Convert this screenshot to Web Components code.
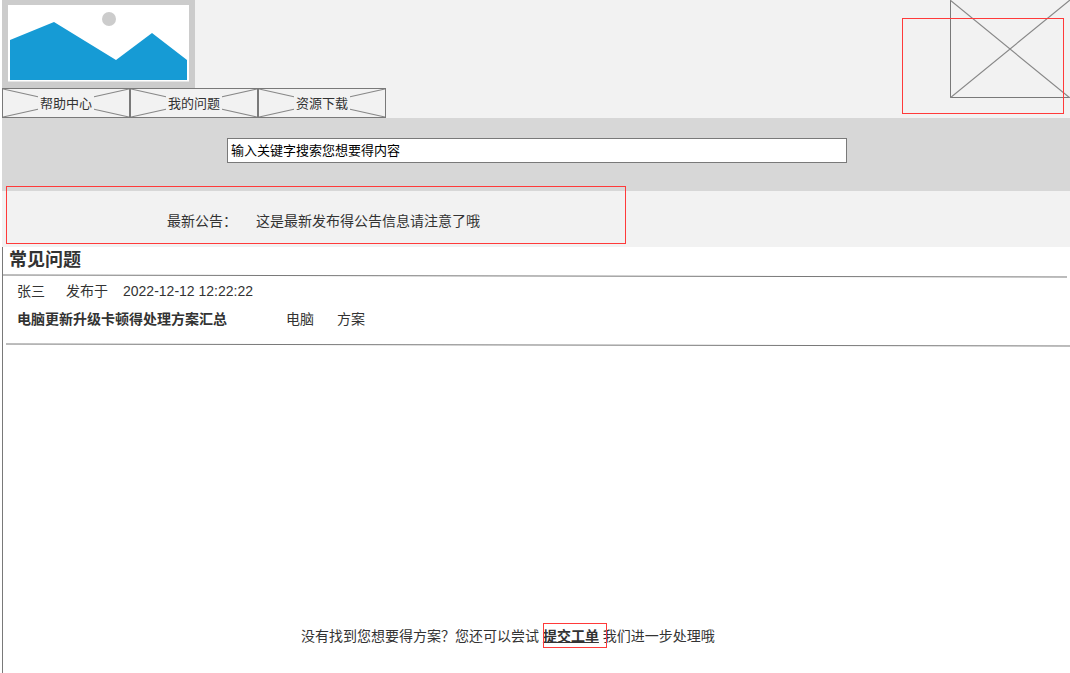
<!DOCTYPE html>
<html lang="zh">
<head>
<meta charset="utf-8">
<title>帮助中心</title>
<style>
  html, body { margin: 0; padding: 0; background: #fff; }
  body {
    font-family: "Liberation Sans", "Noto Sans CJK SC", sans-serif;
    font-size: 14px;
    color: #333;
  }
</style>
</head>
<body>
<help-page>
  <site-header>
    <nav-tab>帮助中心</nav-tab>
    <nav-tab>我的问题</nav-tab>
    <nav-tab>资源下载</nav-tab>
  </site-header>
  <search-band placeholder="输入关键字搜索您想要得内容"></search-band>
  <notice-band label="最新公告：" text="这是最新发布得公告信息请注意了哦"></notice-band>
  <faq-section heading="常见问题">
    <faq-item author="张三" time="2022-12-12 12:22:22" title="电脑更新升级卡顿得处理方案汇总" tags="电脑,方案"></faq-item>
  </faq-section>
</help-page>

<script>
// sloped rule used under the heading and under each item
const slopedRule = `<svg class="rule" width="1064" height="4" viewBox="0 0 1064 4"><line x1="0" y1="1" x2="1064" y2="3" stroke="#797979" stroke-width="1"/></svg>`;

class HelpPage extends HTMLElement {
  constructor() {
    super();
    this.attachShadow({ mode: 'open' });
    this.shadowRoot.innerHTML = `
      <style>
        :host { display: block; width: 1070px; height: 673px; overflow: hidden; }
        .wrap { display: flex; flex-direction: column; height: 100%; padding-left: 2px; box-sizing: border-box; }
      </style>
      <div class="wrap"><slot></slot></div>`;
  }
}
customElements.define('help-page', HelpPage);

class SiteHeader extends HTMLElement {
  constructor() {
    super();
    this.attachShadow({ mode: 'open' });
    this.shadowRoot.innerHTML = `
      <style>
        :host { display: block; position: relative; height: 118px; background: #f2f2f2; flex: none; }
        .logo { display: block; width: 193px; height: 88px; }
        nav { display: flex; }
        .x { position: absolute; left: 948px; top: 0; }
        .red { position: absolute; left: 900px; top: 18px; width: 160px; height: 94px; border: 1px solid #ff3a3a; }
      </style>
      <svg class="logo" viewBox="0 0 193 88">
        <rect width="193" height="88" fill="#ccc"/>
        <rect x="6" y="5" width="181" height="76.5" fill="#fff"/>
        <path d="M8 40 L52 22 L114 60 L150 33 L185 60 L185 80 L8 80 Z" fill="#169bd5"/>
        <circle cx="107" cy="19" r="7" fill="#ccc"/>
      </svg>
      <nav><slot></slot></nav>
      <svg class="x" width="120" height="98" viewBox="0 0 120 98">
        <path d="M.5 0V97.5H120" fill="none" stroke="#797979"/>
        <path d="M0 0L120 98M0 98L120 0" fill="none" stroke="#888" stroke-width="1.2"/>
      </svg>
      <div class="red"></div>`;
  }
}
customElements.define('site-header', SiteHeader);

class NavTab extends HTMLElement {
  constructor() {
    super();
    this.attachShadow({ mode: 'open' });
    this.shadowRoot.innerHTML = `
      <style>
        :host { display: flex; position: relative; align-items: center; justify-content: center; width: 128px; height: 30px; box-sizing: border-box; border: 1px solid #797979; padding-top: 2px; font-size: 13px; }
        svg { position: absolute; inset: 0; width: 100%; height: 100%; }
        span { position: relative; background: #f2f2f2; padding: 0 2px; line-height: 16px; }
      </style>
      <svg viewBox="0 0 126 28" preserveAspectRatio="none"><path d="M0 0L126 28M0 28L126 0" stroke="#888" stroke-width="1.1" fill="none"/></svg>
      <span><slot></slot></span>`;
  }
}
customElements.define('nav-tab', NavTab);

class SearchBand extends HTMLElement {
  constructor() {
    super();
    this.attachShadow({ mode: 'open' });
    const ph = this.getAttribute('placeholder');
    this.shadowRoot.innerHTML = `
      <style>
        :host { display: block; height: 73px; background: #d7d7d7; padding: 20px 0 0 225px; box-sizing: border-box; flex: none; }
        input { display: block; width: 620px; height: 25px; box-sizing: border-box; border: 1px solid #797979; background: #fff; padding: 0 3px; margin: 0; font: inherit; font-size: 13px; outline: none; }
        input::placeholder { color: #000; opacity: 1; }
      </style>
      <input placeholder="${ph}">`;
  }
}
customElements.define('search-band', SearchBand);

class NoticeBand extends HTMLElement {
  constructor() {
    super();
    this.attachShadow({ mode: 'open' });
    this.shadowRoot.innerHTML = `
      <style>
        :host { display: flex; position: relative; height: 56px; background: #f2f2f2; align-items: center; padding: 2px 0 0 165px; box-sizing: border-box; flex: none; }
        .text { margin-left: 19px; }
        .red { position: absolute; left: 4px; top: -5px; width: 618px; height: 56px; border: 1px solid #ff3a3a; }
      </style>
      <span>${this.getAttribute('label')}</span>
      <span class="text">${this.getAttribute('text')}</span>
      <div class="red"></div>`;
  }
}
customElements.define('notice-band', NoticeBand);

class FaqSection extends HTMLElement {
  constructor() {
    super();
    this.attachShadow({ mode: 'open' });
    this.shadowRoot.innerHTML = `
      <style>
        :host { display: flex; flex-direction: column; flex: 1; min-height: 0; border-left: 1px solid #797979; background: #fff; }
        h2 { margin: 0; padding: 0 0 0 6px; height: 28px; font-size: 18px; line-height: 26px; font-weight: 700; color: #333; }
        .rule { display: block; margin-top: -1px; }
        .items { flex: 1; padding-left: 3px; overflow: hidden; }
        .foot { height: 47px; flex: none; padding-left: 298px; line-height: 20px; }
        .foot b { position: relative; display: inline-block; text-decoration: underline; font-weight: 700; }
        .foot b::after { content: ""; position: absolute; left: 0; top: -3px; width: 62px; height: 23px; border: 1px solid #ff3a3a; }
      </style>
      <h2>${this.getAttribute('heading')}</h2>
      ${slopedRule}
      <div class="items"><slot></slot></div>
      <div class="foot"><span>没有找到您想要得方案？您还可以尝试</span> <b>提交工单</b> <span>我们进一步处理哦</span></div>`;
  }
}
customElements.define('faq-section', FaqSection);

class FaqItem extends HTMLElement {
  constructor() {
    super();
    this.attachShadow({ mode: 'open' });
    const tags = this.getAttribute('tags').split(',').map(t => `<span>${t}</span>`).join('');
    this.shadowRoot.innerHTML = `
      <style>
        :host { display: block; }
        .meta { display: flex; padding: 3px 0 0 11px; line-height: 20px; gap: 21px; }
        .meta span:last-child { margin-left: -6px; }
        .row { display: flex; margin-top: 8px; padding-left: 11px; line-height: 20px; }
        .title { width: 269px; font-weight: 700; }
        .tags { display: flex; gap: 23px; }
        .rule { display: block; margin-top: 14px; }
      </style>
      <div class="meta"><span>${this.getAttribute('author')}</span><span>发布于</span><span>${this.getAttribute('time')}</span></div>
      <div class="row"><span class="title">${this.getAttribute('title')}</span><span class="tags">${tags}</span></div>
      ${slopedRule}`;
  }
}
customElements.define('faq-item', FaqItem);
</script>
</body>
</html>
